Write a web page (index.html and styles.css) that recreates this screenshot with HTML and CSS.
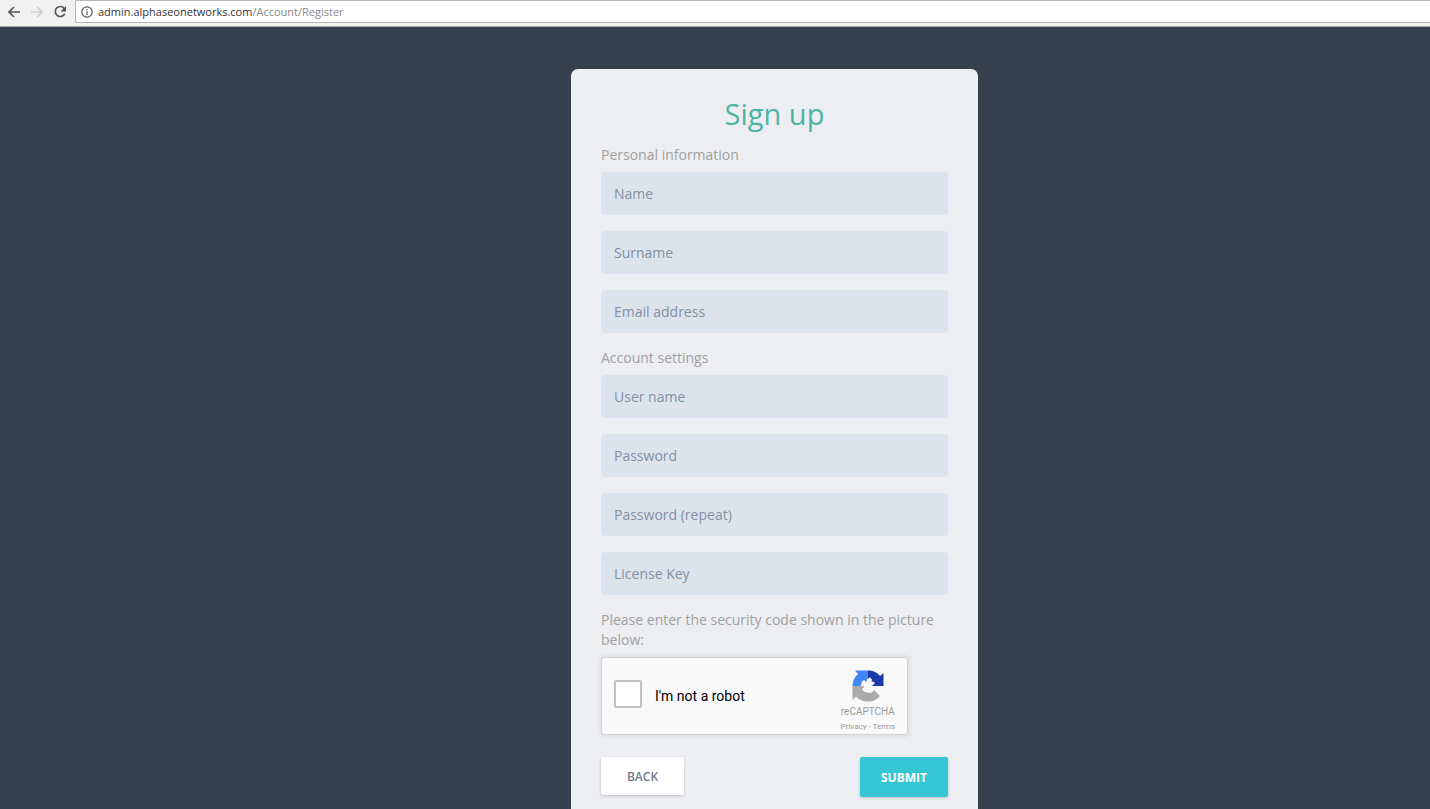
FILE: index.html
```html
<!DOCTYPE html>
<html lang="en">
<head>
    <meta charset="UTF-8">
    <meta name="viewport" content="width=device-width, initial-scale=1.0">
    <title>Sign up</title>
    <link rel="stylesheet" href="styles.css">
</head>
<body>
    <nav class="toolbar">
        <button class="nav-btn" type="button" aria-label="Back">
            <svg class="nav-icon" viewBox="0 0 16 16"><path d="M14 8H3M8 3L3 8L8 13"/></svg>
        </button>
        <button class="nav-btn" type="button" aria-label="Forward" disabled>
            <svg class="nav-icon" viewBox="0 0 16 16"><path d="M2 8H13M8 3L13 8L8 13"/></svg>
        </button>
        <button class="nav-btn" type="button" aria-label="Reload">
            <svg class="nav-icon" viewBox="0 0 16 16">
                <path d="M12.4 4.7A5 5 0 1 0 12.8 9.6"/>
                <path class="solid" d="M14 2V7.4H8.6Z"/>
            </svg>
        </button>
        <div class="address">
            <svg class="info-icon" viewBox="0 0 12 12">
                <circle cx="6" cy="6" r="5.2"/>
                <path d="M6 5.3V9M6 3V4.3"/>
            </svg>
            <span>admin.alphaseonetworks.com<span class="path">/Account/Register</span></span>
        </div>
    </nav>

    <main class="page">
        <form class="card">
            <h1>Sign up</h1>

            <p class="hint">Personal information</p>
            <input class="field" type="text" placeholder="Name" aria-label="Name">
            <input class="field" type="text" placeholder="Surname" aria-label="Surname">
            <input class="field" type="email" placeholder="Email address" aria-label="Email address">

            <p class="hint">Account settings</p>
            <input class="field" type="text" placeholder="User name" aria-label="User name">
            <input class="field" type="password" placeholder="Password" aria-label="Password">
            <input class="field" type="password" placeholder="Password (repeat)" aria-label="Password (repeat)">
            <input class="field" type="text" placeholder="License Key" aria-label="License Key">

            <p class="hint">Please enter the security code shown in the picture below:</p>
            <div class="captcha">
                <input class="captcha-check" type="checkbox" id="robot">
                <label class="captcha-label" for="robot">I'm not a robot</label>
                <div class="captcha-brand">
                    <svg class="captcha-logo" viewBox="0 0 64 64">
                        <path fill="#1c3aa9" d="M32 1C42 1 51 5 56 12L63 6V32H40L46 26L42 23L39 24L40 19L36 15L32 17Z"/>
                        <path fill="#4285f4" d="M32 1H6L12 8C5 14 1 22 1 32H17L20 23L24 20L29 24L30 18L32 17Z"/>
                        <path fill="#ababab" d="M1 32V60L8 53C14 60 22 63 32 63C42 63 51 59 56 52L44 40L40 45L34 46L26 44L21 40L20 37L25 35L22 32Z"/>
                    </svg>
                    <span class="captcha-name">reCAPTCHA</span>
                    <span class="captcha-links"><a href="#">Privacy</a> - <a href="#">Terms</a></span>
                </div>
            </div>

            <div class="actions">
                <button class="btn btn-back" type="button">BACK</button>
                <button class="btn btn-submit" type="submit">SUBMIT</button>
            </div>
        </form>
    </main>
</body>
</html>
```
FILE: styles.css
```css
* {
    box-sizing: border-box;
}

body {
    margin: 0;
    min-height: 100vh;
    background-color: #364150;
    font-family: "Open Sans", sans-serif;
}

/* Browser bar */
.toolbar {
    display: flex;
    align-items: flex-start;
    height: 27px;
    padding-left: 6px;
    background-color: #f1f1f1;
    border-bottom: 1px solid #a9a9a9;
}

.nav-btn {
    display: flex;
    align-items: center;
    justify-content: center;
    width: 23px;
    height: 23px;
    padding: 0 7px 0 0;
    border: none;
    background: none;
    color: #555;
}

.nav-btn:disabled {
    color: #ccc;
}

.nav-icon {
    flex: none;
    width: 16px;
    height: 16px;
    fill: none;
    stroke: currentColor;
    stroke-width: 1.7;
}

.nav-icon .solid {
    fill: currentColor;
    stroke: none;
}

.address {
    display: flex;
    flex: 1;
    align-items: center;
    gap: 5px;
    height: 23px;
    padding-left: 5px;
    background-color: #fff;
    border: 1px solid #b5b5b5;
    border-right: none;
    border-radius: 2px 0 0 2px;
    color: #333;
    font-size: 11px;
}

.address .path {
    color: #888;
}

.info-icon {
    width: 12px;
    height: 12px;
    fill: none;
    stroke: #555;
    stroke-width: 1.2;
}

/* Sign up form */
.page {
    display: flex;
    justify-content: center;
    padding: 42px 0 0 119px;
}

.card {
    width: 100%;
    max-width: 407px;
    padding: 25px 30px 30px;
    background-color: #eceef1;
    border-radius: 7px 7px 0 0;
}

h1 {
    margin: 0 0 11px;
    color: #4db3a2;
    font-size: 29px;
    font-weight: 400;
    line-height: 40px;
    text-align: center;
}

.hint {
    margin: 0;
    padding-bottom: 7px;
    color: #a0a0a0;
    font-size: 14px;
    line-height: 20px;
}

.field {
    display: block;
    width: 100%;
    height: 43px;
    margin-bottom: 16px;
    padding: 0 13px;
    background-color: #dde3ec;
    border: none;
    border-radius: 4px;
    color: #8290a3;
    font-family: inherit;
    font-size: 14px;
}

.field + .hint {
    margin-top: -1px;
}

.field::placeholder {
    color: #8290a3;
    opacity: 1;
}

/* Captcha */
.captcha {
    display: flex;
    align-items: center;
    width: 307px;
    max-width: 100%;
    height: 78px;
    padding: 0 12px;
    background-color: #f9f9f9;
    border: 1px solid #d3d3d3;
    border-radius: 3px;
    box-shadow: 0 0 4px 1px rgba(0, 0, 0, 0.08);
    font-family: Roboto, sans-serif;
}

.captcha-check {
    appearance: none;
    width: 28px;
    height: 28px;
    margin: 0 13px 4px 0;
    background-color: #fff;
    border: 2px solid #c1c1c1;
    border-radius: 2px;
}

.captcha-label {
    flex: 1;
    color: #000;
    font-size: 14px;
}

.captcha-brand {
    display: flex;
    flex-direction: column;
    align-items: center;
    padding-top: 12px;
    color: #999;
}

.captcha-logo {
    width: 32px;
    height: 32px;
}

.captcha-name {
    margin-top: 3px;
    font-size: 10px;
    line-height: 14px;
}

.captcha-links {
    font-size: 8px;
    line-height: 16px;
}

.captcha-links a {
    color: inherit;
    text-decoration: none;
}

.actions {
    display: flex;
    align-items: flex-start;
    justify-content: space-between;
    margin-top: 22px;
}

.btn {
    border: none;
    border-radius: 2px;
    box-shadow: 0 1px 3px rgba(0, 0, 0, 0.2);
    font-family: inherit;
    font-size: 12px;
    font-weight: 600;
}

.btn-back {
    width: 83px;
    height: 38px;
    background-color: #fff;
    color: #6f7b8a;
}

.btn-submit {
    width: 88px;
    height: 40px;
    background-color: #36c6d3;
    color: #fff;
    font-weight: 700;
}
```
